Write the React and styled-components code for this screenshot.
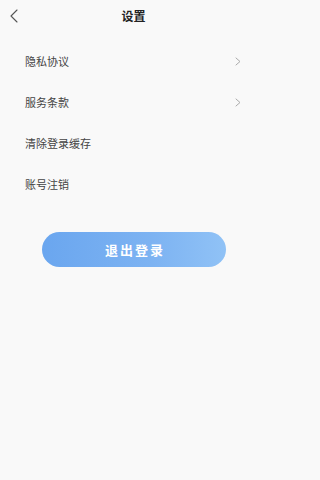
import React from "react";
import styled, { createGlobalStyle } from "styled-components";

const GlobalStyle = createGlobalStyle`
  html, body {
    margin: 0;
    padding: 0;
    background: #f9f9f9;
    font-family: "Noto Sans CJK SC", "Noto Sans", sans-serif;
  }
`;

const Page = styled.div`
  width: 267px;
  min-height: 480px;
  background: #f9f9f9;
`;

const Header = styled.header`
  height: 32px;
  display: flex;
  align-items: center;
  justify-content: center;
  position: relative;
`;

const BackButton = styled.button`
  position: absolute;
  left: 6px;
  top: 6px;
  width: 16px;
  height: 20px;
  padding: 0;
  border: none;
  background: none;
  display: flex;
  align-items: center;
  justify-content: center;
`;

const Title = styled.h1`
  margin: 0;
  font-size: 12px;
  font-weight: 700;
  color: #222;
  line-height: 1;
`;

const List = styled.ul`
  list-style: none;
  margin: 9px 0 0;
  padding: 0 25px;
`;

const Row = styled.li`
  height: 41px;
  display: flex;
  align-items: center;
  justify-content: space-between;
`;

const Label = styled.span`
  font-size: 11px;
  color: #444;
  line-height: 1;
`;

const Arrow = styled.svg`
  margin-right: 0;
  margin-left: auto;
  transform: translateX(-1px);
`;

const Footer = styled.div`
  display: flex;
  justify-content: center;
  margin-top: 27px;
  padding-left: 1px;
`;

const LogoutButton = styled.button`
  width: 184px;
  height: 35px;
  border: none;
  border-radius: 18px;
  background: linear-gradient(90deg, #6aa6ef 0%, #7db3f2 60%, #90c2f6 100%);
  color: #fff;
  font-family: inherit;
  font-size: 13px;
  font-weight: 700;
  letter-spacing: 2px;
  padding: 0 0 0 2px;
`;

const items = [
  { name: "隐私协议", arrow: true },
  { name: "服务条款", arrow: true },
  { name: "清除登录缓存", arrow: false },
  { name: "账号注销", arrow: false }
];

const App = () => (
  <Page>
    <GlobalStyle />
    <Header>
      <BackButton>
        <svg width="8" height="14" viewBox="0 0 8 14">
          <path d="M7 1 L1 7 L7 13" fill="none" stroke="#555" strokeWidth="1.1" strokeLinecap="round" strokeLinejoin="round" />
        </svg>
      </BackButton>
      <Title>设置</Title>
    </Header>
    <List>
      {items.map(item => (
        <Row key={item.name}>
          <Label>{item.name}</Label>
          {item.arrow ? (
            <Arrow width="6" height="9" viewBox="0 0 6 9">
              <path d="M1 1 L5 4.5 L1 8" fill="none" stroke="#aaa" strokeWidth="1" strokeLinecap="round" strokeLinejoin="round" />
            </Arrow>
          ) : null}
        </Row>
      ))}
    </List>
    <Footer>
      <LogoutButton>退出登录</LogoutButton>
    </Footer>
  </Page>
);

export default App;
